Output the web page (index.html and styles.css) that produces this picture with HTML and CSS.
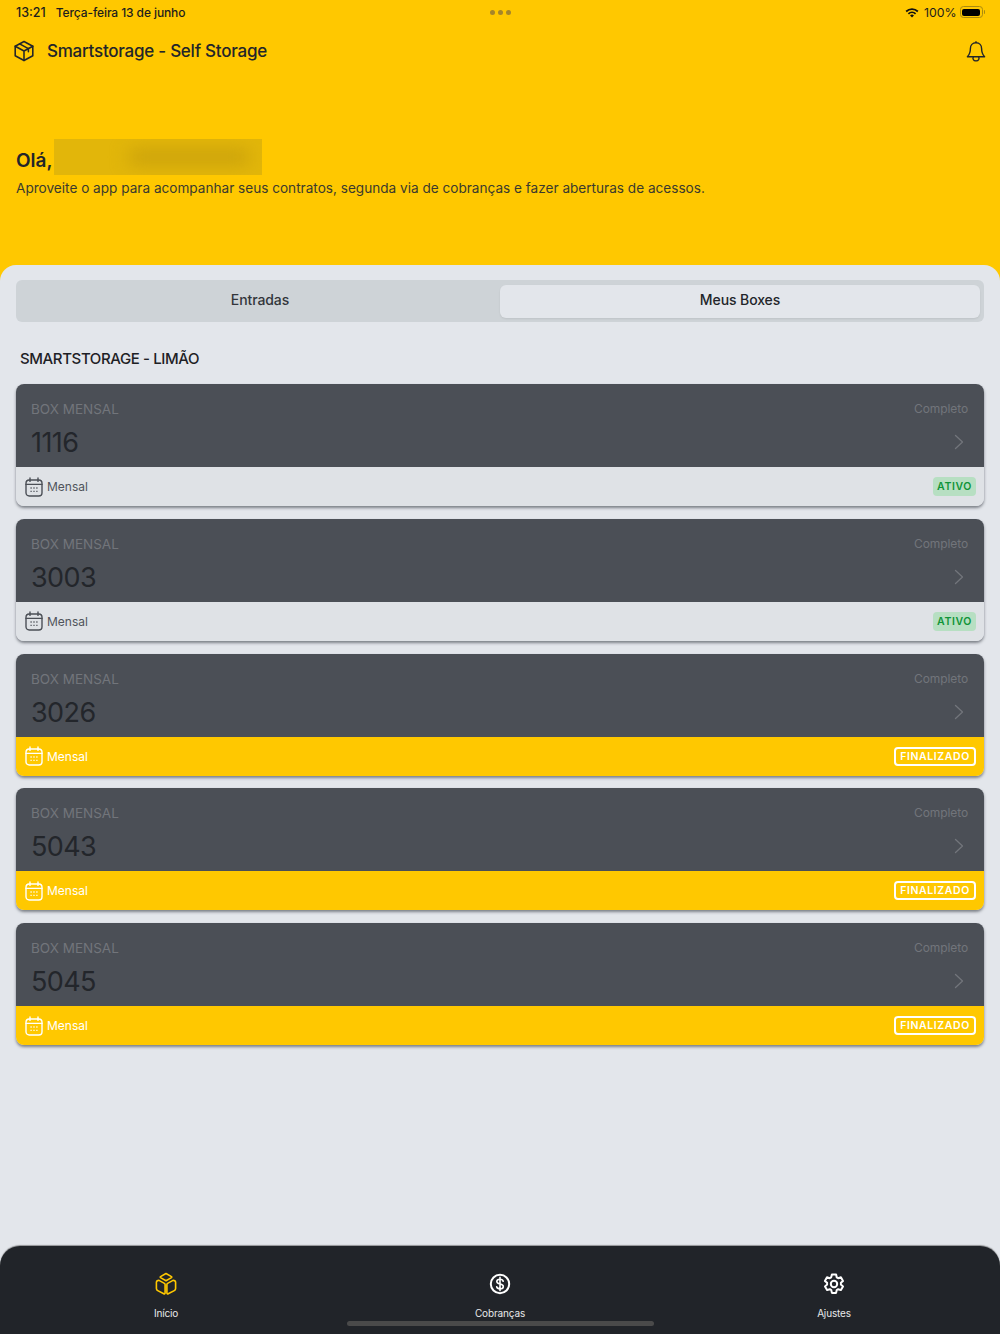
FILE: index.html
```html
<!DOCTYPE html>
<html lang="pt">
<head>
<meta charset="utf-8">
<title>Smartstorage</title>
<link rel="stylesheet" href="styles.css">
</head>
<body>
<svg class="sprite" width="0" height="0" aria-hidden="true">
  <symbol id="cal" viewBox="0 0 18 20">
    <rect x="1" y="3" width="16" height="16" rx="3.2" fill="none" stroke="currentColor" stroke-width="1.4"/>
    <path d="M1 7.4h16M5 1v3.4M13 1v3.4" fill="none" stroke="currentColor" stroke-width="1.4" stroke-linecap="round"/>
    <path d="M5.5 11h1.2M8.4 11h1.2M11.3 11h1.2M5.5 14.4h1.2M8.4 14.4h1.2M11.3 14.4h1.2" fill="none" stroke="currentColor" stroke-width="1.3"/>
  </symbol>
  <symbol id="chev" viewBox="0 0 10 16">
    <path d="M1.5 1.5 8.5 8l-7 6.500" fill="none" stroke="currentColor" stroke-width="1.300" stroke-linecap="round" stroke-linejoin="round"/>
  </symbol>
</svg>
<header class="hero">
  <div class="status">
    <div class="status-left"><span>13:21</span><span class="date">Terça-feira 13 de junho</span></div>
    <div class="dots"><i></i><i></i><i></i></div>
    <div class="status-right">
      <svg width="14" height="11" viewBox="0 0 15 11"><path d="M.6 3.700a10 10 0 0 1 13.800 0l-1.300 1.400a8 8 0 0 0-11.200 0zM3 6.200a6.600 6.600 0 0 1 9 0l-1.300 1.400a4.700 4.700 0 0 0-6.400 0zM5.400 8.600a3 3 0 0 1 4.200 0L7.500 10.800z" fill="#111"/></svg>
      <span>100%</span>
      <span class="battery"><b></b></span><span class="battery-tip"></span>
    </div>
  </div>
  <div class="appbar">
    <svg class="logo" width="22" height="22" viewBox="0 0 24 24" fill="none" stroke="#22252a" stroke-width="1.700" stroke-linejoin="round" stroke-linecap="round">
      <path d="M12 1.600 21.600 6.800v10.400L12 22.400 2.400 17.200V6.800z"/>
      <path d="M2.400 6.800 12 12l9.600-5.200M12 12v10.400M7.200 4.200 16.800 9.400v3.400"/>
    </svg>
    <h1>Smartstorage - Self Storage</h1>
    <svg class="bell" width="20" height="22" viewBox="0 0 20 22" fill="none" stroke="#22252a" stroke-width="1.400" stroke-linejoin="round">
      <path d="M10 2.800c-3.500 0-5.600 2.700-5.600 5.800 0 4.500-1 6.200-3 8.200h17.200c-2-2-3-3.700-3-8.200 0-3.100-2.100-5.800-5.600-5.800z"/>
      <path d="M10 2.800V1.200M7.400 16.800a2.600 2.600 0 0 0 2.600 4 2.600 2.600 0 0 0 2.600-4"/>
    </svg>
  </div>
  <div class="greet">
    <div class="hello"><span>Olá,</span><div class="blur"><i></i></div></div>
    <p>Aproveite o app para acompanhar seus contratos, segunda via de cobranças e fazer aberturas de acessos.</p>
  </div>
</header>
<main class="main">
  <div class="tabs">
    <div class="tab">Entradas</div>
    <div class="tab active">Meus Boxes</div>
  </div>
  <h2>SMARTSTORAGE - LIMÃO</h2>
  <section class="cards">
    <article class="card">
      <div class="card-top">
        <div class="row"><span>BOX MENSAL</span><span class="plan">Completo</span></div>
        <div class="row num"><strong>1116</strong><svg class="chev" width="10" height="16"><use href="#chev"/></svg></div>
      </div>
      <div class="card-foot"><svg class="cal" width="18" height="20"><use href="#cal"/></svg><span>Mensal</span><em class="badge ok">ATIVO</em></div>
    </article>
    <article class="card">
      <div class="card-top">
        <div class="row"><span>BOX MENSAL</span><span class="plan">Completo</span></div>
        <div class="row num"><strong>3003</strong><svg class="chev" width="10" height="16"><use href="#chev"/></svg></div>
      </div>
      <div class="card-foot"><svg class="cal" width="18" height="20"><use href="#cal"/></svg><span>Mensal</span><em class="badge ok">ATIVO</em></div>
    </article>
    <article class="card done">
      <div class="card-top">
        <div class="row"><span>BOX MENSAL</span><span class="plan">Completo</span></div>
        <div class="row num"><strong>3026</strong><svg class="chev" width="10" height="16"><use href="#chev"/></svg></div>
      </div>
      <div class="card-foot"><svg class="cal" width="18" height="20"><use href="#cal"/></svg><span>Mensal</span><em class="badge end">FINALIZADO</em></div>
    </article>
    <article class="card done">
      <div class="card-top">
        <div class="row"><span>BOX MENSAL</span><span class="plan">Completo</span></div>
        <div class="row num"><strong>5043</strong><svg class="chev" width="10" height="16"><use href="#chev"/></svg></div>
      </div>
      <div class="card-foot"><svg class="cal" width="18" height="20"><use href="#cal"/></svg><span>Mensal</span><em class="badge end">FINALIZADO</em></div>
    </article>
    <article class="card done">
      <div class="card-top">
        <div class="row"><span>BOX MENSAL</span><span class="plan">Completo</span></div>
        <div class="row num"><strong>5045</strong><svg class="chev" width="10" height="16"><use href="#chev"/></svg></div>
      </div>
      <div class="card-foot"><svg class="cal" width="18" height="20"><use href="#cal"/></svg><span>Mensal</span><em class="badge end">FINALIZADO</em></div>
    </article>
  </section>
</main>
<nav class="nav">
  <div class="nav-item cur">
    <svg width="24" height="24" viewBox="0 0 24 24" fill="none" stroke="currentColor" stroke-width="1.600" stroke-linejoin="round">
      <path d="M12 1.500 17.500 4.600a.6.6 0 0 1 0 1L12 8.800 6.500 5.600a.6.6 0 0 1 0-1z"/>
      <path d="M5 8.400 10.400 11.400a1.400 1.400 0 0 1 .7 1.200V21a.9.900 0 0 1-1.300.8l-6.100-3.200a2.400 2.400 0 0 1-1.300-2.100v-6.300A2.200 2.200 0 0 1 5 8.400z"/>
      <path d="M19 8.400 13.600 11.400a1.400 1.400 0 0 0-.7 1.200V21a.9.900 0 0 0 1.300.8l6.100-3.200a2.400 2.400 0 0 0 1.300-2.100v-6.300A2.200 2.200 0 0 0 19 8.400z"/>
    </svg>
    <span>Início</span>
  </div>
  <div class="nav-item">
    <svg width="24" height="24" viewBox="0 0 24 24" fill="none" stroke="currentColor">
      <circle cx="12" cy="12" r="9.200" stroke-width="2"/>
      <path d="M15.200 9.200c-.3-1.300-1.600-2-3.200-2-1.800 0-3.200.9-3.200 2.400 0 3.300 6.500 1.500 6.500 4.800 0 1.500-1.500 2.400-3.300 2.400-1.700 0-3-.8-3.300-2.100M12 5.400v13.200" stroke-width="1.600" stroke-linecap="round"/>
    </svg>
    <span>Cobranças</span>
  </div>
  <div class="nav-item">
    <svg width="24" height="24" viewBox="0 0 24 24" fill="none" stroke="currentColor" stroke-width="2" stroke-linejoin="round">
      <path d="M9.900 2.500h4.200l.6 2.800 1.500.9 2.700-.9 2.100 3.600-2.100 1.900v1.800l2.100 1.900-2.100 3.600-2.700-.9-1.500.9-.6 2.800H9.900l-.6-2.800-1.500-.9-2.700.9-2.100-3.600 2.100-1.900v-1.800L2.900 8.900 5 5.300l2.700.9 1.500-.9z"/>
      <circle cx="12" cy="12" r="3.200"/>
    </svg>
    <span>Ajustes</span>
  </div>
  <div class="home-bar"></div>
</nav>
</body>
</html>
```
FILE: styles.css
```css
* { box-sizing: border-box; }
html, body { margin: 0; height: 100%; }
body {
  width: 1000px;
  height: 1334px;
  overflow: hidden;
  display: flex;
  flex-direction: column;
  font-family: Inter, "Liberation Sans", sans-serif;
  background: #e3e6eb;
  color: #22252a;
}
.sprite { position: absolute; }

.hero { height: 281px; flex: none; background: #ffc800; }
.status {
  height: 24px;
  padding: 0 15px 0 16px;
  display: grid;
  grid-template-columns: 1fr auto 1fr;
  align-items: center;
  font-size: 12.500px;
  font-weight: 500;
  color: #1d1d1d;
}
.status-left { display: flex; gap: 10px; }
.date { font-size: 12px; letter-spacing: -.1px; }
.dots { display: flex; gap: 3px; }
.dots i { width: 5px; height: 5px; border-radius: 50%; background: #a5852a; }
.status-right { display: flex; justify-content: flex-end; align-items: center; gap: 3px; font-weight: 400; font-size: 12.300px; }
.status-right svg { margin-right: 2px; }
.battery { width: 23px; height: 12px; border: 1px solid #a98a10; border-radius: 3.500px; padding: 1.500px; display: flex; }
.battery b { flex: 1; background: #000; border-radius: 2px; }
.battery-tip { width: 1.500px; height: 4px; background: #a98a10; margin-left: -2px; border-radius: 0 1px 1px 0; }

.appbar { height: 54px; padding: 0 14px 0 13px; display: flex; align-items: center; }
.logo { flex: none; }
.appbar h1 { margin: 0 0 0 12px; font-size: 17px; letter-spacing: -.25px; font-weight: 500; flex: 1; line-height: 1; }
.bell { flex: none; }

.greet { padding: 0 16px; margin-top: 61px; }
.hello { display: flex; align-items: center; height: 36px; font-size: 19px; font-weight: 600; }
.hello span { padding-top: 6px; }
.blur { width: 208px; height: 36px; margin-left: 1px; background: #e2b60a; overflow: hidden; display: flex; align-items: center; }
.blur i { display: block; width: 120px; height: 12px; margin-left: 75px; background: #c39c0c; filter: blur(9px); }
.greet p { margin: 3px 0 0; font-size: 13.600px; line-height: 20px; color: #3a3a2e; }

.main {
  flex: 1;
  margin-top: -16px;
  background: #e3e6eb;
  border-radius: 16px 16px 0 0;
  padding: 15px 16px 0;
  position: relative;
}
.tabs { display: flex; height: 42px; padding: 5px 4px 4px; background: #ced3d7; border-radius: 6px; }
.tab { flex: 1; display: flex; align-items: center; justify-content: center; padding-bottom: 4px; font-size: 14px; font-weight: 500; letter-spacing: -.1px; color: #33363b; border-radius: 6px; }
.tab.active { flex: none; width: 480px; background: #e3e6eb; color: #22252a; box-shadow: 0 1px 2px rgba(0,0,0,.08); }
h2 { margin: 27px 0 15px 4px; font-size: 15px; letter-spacing: -.39px; line-height: 20px; font-weight: 500; color: #1e2125; }

.cards { display: flex; flex-direction: column; gap: 12.750px; }
.card { height: 122px; border-radius: 8px; overflow: hidden; box-shadow: 0 2px 3px rgba(40,45,55,.55); display: flex; flex-direction: column; }
.card-top { height: 83px; flex: none; background: #4b4f56; padding: 16px 16px 0 15px; }
.row { display: flex; justify-content: space-between; align-items: center; color: #72757b; font-size: 13.500px; line-height: 18px; }
.plan { font-size: 12px; letter-spacing: -.1px; color: #72757b; }
.num { margin-top: 8px; height: 34px; }
.num strong { font-size: 27px; letter-spacing: -.6px; font-weight: 400; line-height: 34px; color: #23262b; }
.chev { color: #72757b; margin: 0 4px 2px 0; }

.card-foot { flex: 1; background: #dfe2e6; display: flex; align-items: center; padding: 0 8px 0 9px; font-size: 12px; color: #50545b; }
.cal { flex: none; margin-right: 4px; color: #4b4f56; }
.card-foot > span { flex: 1; }
.done .card-foot { background: #ffc800; color: #fff; }
.done .cal { color: #fff; }
.badge { font-style: normal; font-size: 10.500px; font-weight: 600; letter-spacing: .6px; border-radius: 4px; display: flex; align-items: center; justify-content: center; height: 19px; }
.ok { background: #b7dfc2; color: #0f9438; width: 43px; }
.end { border: 2px solid #fff; color: #fff; width: 82px; }

.nav {
  flex: none;
  height: 88px;
  background: #212429;
  border-radius: 20px 20px 0 0;
  display: grid;
  grid-template-columns: 332px 336px 332px;
  position: relative;
  color: #fff;
  box-shadow: 0 -1px 1px rgba(60,60,60,.5);
}
.nav-item { display: flex; flex-direction: column; align-items: center; padding-top: 26px; font-size: 10px; letter-spacing: -.15px; font-weight: 400; color: #e8e9ea; }
.nav-item span { margin-top: 10px; line-height: 14px; }
.nav-item svg { color: #fff; }
.nav-item.cur svg { color: #ffc800; }
.home-bar { position: absolute; left: 347px; bottom: 8px; width: 307px; height: 5px; border-radius: 3px; background: #4a4a4a; }
```
